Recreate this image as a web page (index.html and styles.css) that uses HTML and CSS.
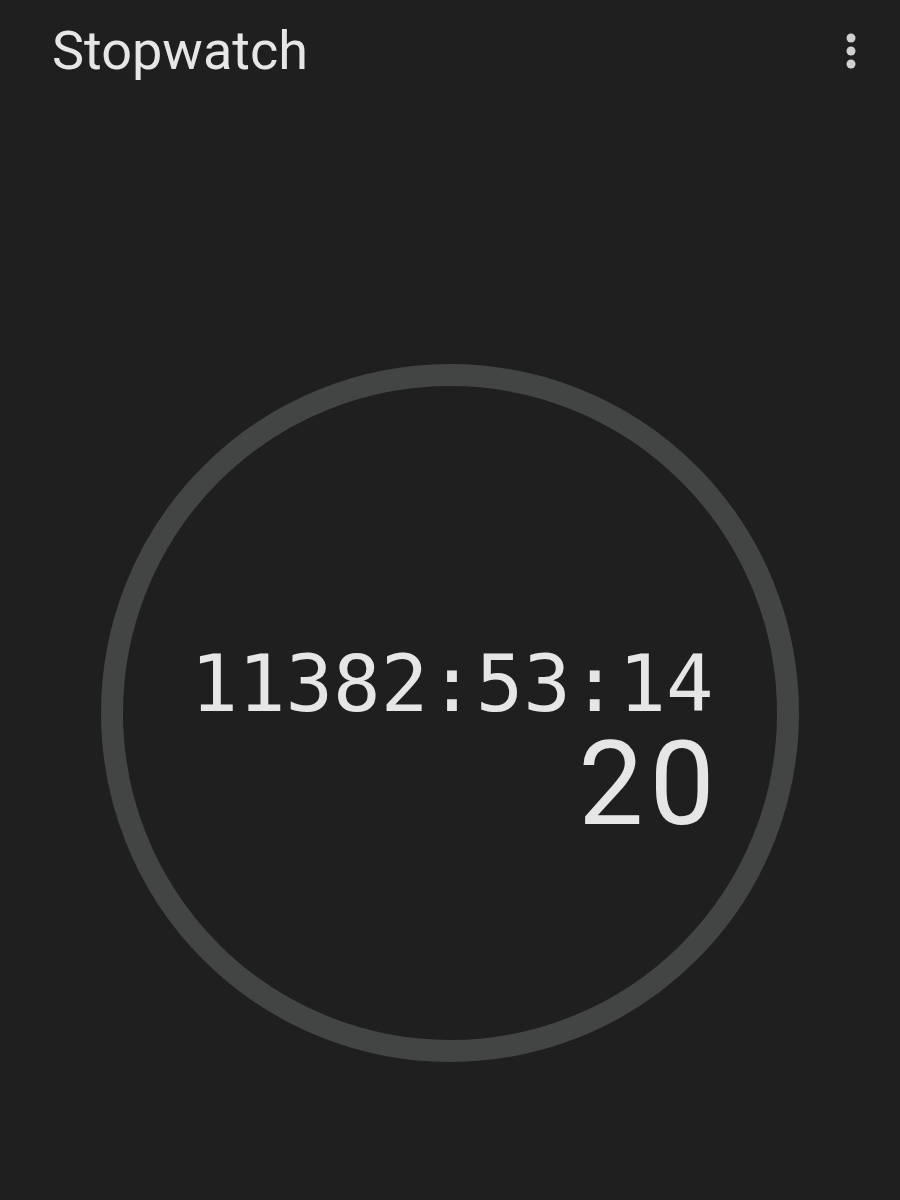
FILE: index.html
```html
<!DOCTYPE html>
<html lang="en">
  <head>
    <meta charset="UTF-8" />
    <meta name="viewport" content="width=device-width, initial-scale=1.0" />
    <title>Stopwatch</title>
    <link rel="stylesheet" href="styles.css">
  </head>
  <body>
    <div class="app">
      <header class="app-bar">
        <h1 class="title">Stopwatch</h1>
        <button class="menu" type="button" aria-label="More options">
          <svg width="10" height="36" viewBox="0 0 10 36">
            <circle cx="5" cy="5" r="4.5" />
            <circle cx="5" cy="18" r="4.5" />
            <circle cx="5" cy="31" r="4.5" />
          </svg>
        </button>
      </header>

      <main class="dial-area">
        <div class="dial">
          <div class="readout">
            <div class="time">11382:53:14</div>
            <div class="hundredths">20</div>
          </div>
        </div>
      </main>
    </div>
  </body>
</html>
```

FILE: styles.css
```css
html,
body {
  margin: 0;
  height: 100%;
}

body {
  background-color: #1f1f1f;
  color: #e6e6e6;
  font-family: Roboto, "Noto Sans", sans-serif;
}

.app {
  display: flex;
  flex-direction: column;
  height: 1200px;
}

.app-bar {
  display: flex;
  justify-content: space-between;
  align-items: center;
  height: 102px;
  padding: 0 44px 0 52px;
}

.title {
  margin: 0;
  font-size: 54px;
  font-weight: 400;
  line-height: 1;
}

.menu {
  display: flex;
  padding: 0;
  border: none;
  background: none;
  fill: #d0d0d0;
}

.dial-area {
  display: flex;
  justify-content: center;
  padding-top: 262px;
}

.dial {
  box-sizing: border-box;
  width: 698px;
  height: 698px;
  border: 22px solid #434545;
  border-radius: 50%;
  display: flex;
  justify-content: center;
  align-items: center;
}

.readout {
  display: flex;
  flex-direction: column;
  align-items: flex-end;
  margin-top: 60px;
  margin-left: 4px;
}

.time {
  font-family: "DejaVu Sans Mono", monospace;
  font-size: 79px;
  line-height: 1;
}

.hundredths {
  margin-top: 2px;
  margin-right: -7px;
  font-size: 116px;
  line-height: 1;
  letter-spacing: 6px;
}
```
